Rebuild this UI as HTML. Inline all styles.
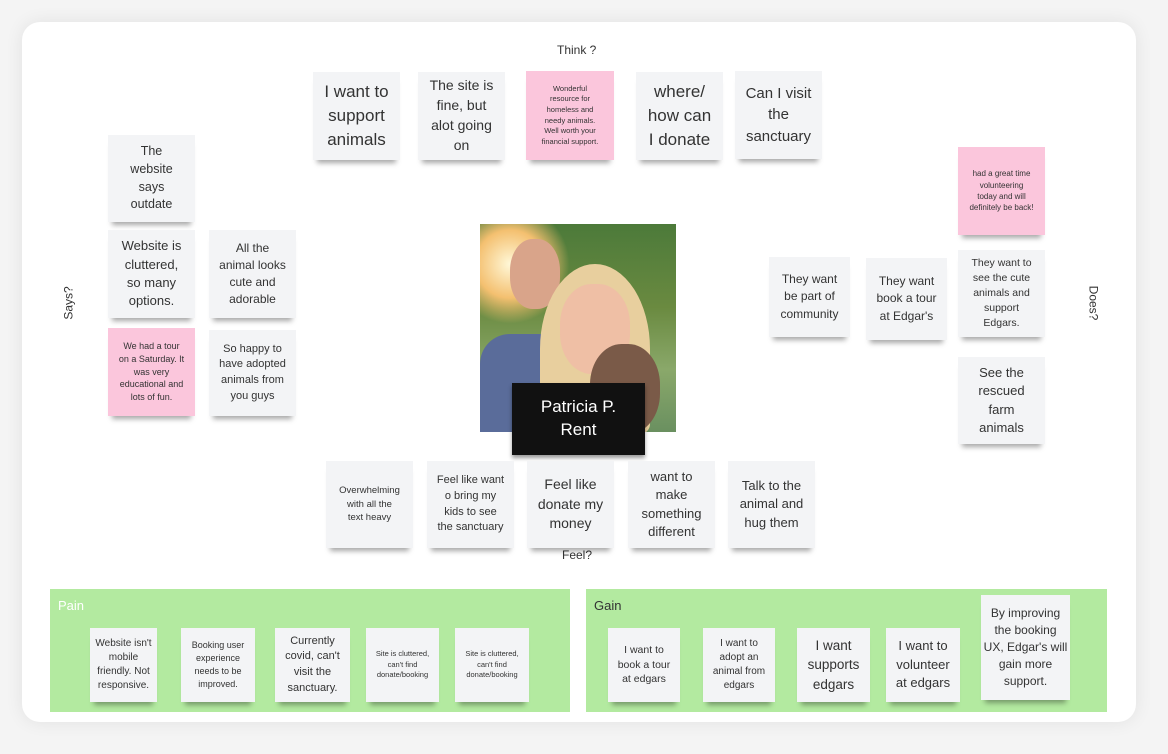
<!DOCTYPE html>
<html><head><meta charset="utf-8"><style>
*{margin:0;padding:0;box-sizing:border-box}
body{width:1168px;height:754px;background:#f4f4f4;font-family:"Liberation Sans",sans-serif;position:relative;overflow:hidden}
.board{position:absolute;left:22px;top:22px;width:1114px;height:700px;background:#fff;border-radius:18px;box-shadow:0 0 18px rgba(0,0,0,.08)}
.n{position:absolute;background:#f3f4f6;color:#333;display:flex;align-items:center;justify-content:center;text-align:center;line-height:1.42;box-shadow:0 7px 5px -4px rgba(0,0,0,.35);white-space:nowrap}
.p{background:#fbc6dc}
.lbl{position:absolute;font-size:12px;color:#333}
.zone{position:absolute;background:#b3eaa0;top:589px;height:123px}
.zone span{position:absolute;left:8px;top:9px;font-size:13px}
</style></head><body>
<div class="board"></div>
<div class="lbl" style="left:557px;top:43px">Think ?</div>
<div class="lbl" style="left:562px;top:548px">Feel?</div>
<div class="lbl" style="left:52px;top:296px;transform:rotate(-90deg)">Says?</div>
<div class="lbl" style="left:1076px;top:296px;transform:rotate(90deg)">Does?</div>

<div class="n" style="left:313px;top:72px;width:87px;height:88px;font-size:17px">I want to<br>support<br>animals</div>
<div class="n" style="left:418px;top:72px;width:87px;height:88px;font-size:14px">The site is<br>fine, but<br>alot going<br>on</div>
<div class="n p" style="left:526px;top:71px;width:88px;height:89px;font-size:7.5px">Wonderful<br>resource for<br>homeless and<br>needy animals.<br>Well worth your<br>financial support.</div>
<div class="n" style="left:636px;top:72px;width:87px;height:88px;font-size:17px">where/<br>how can<br>I donate</div>
<div class="n" style="left:735px;top:71px;width:87px;height:88px;font-size:15px">Can I visit<br>the<br>sanctuary</div>

<div class="n" style="left:108px;top:135px;width:87px;height:87px;font-size:12.5px">The<br>website<br>says<br>outdate</div>
<div class="n" style="left:108px;top:230px;width:87px;height:88px;font-size:13px">Website is<br>cluttered,<br>so many<br>options.</div>
<div class="n" style="left:209px;top:230px;width:87px;height:88px;font-size:12px">All the<br>animal looks<br>cute and<br>adorable</div>
<div class="n p" style="left:108px;top:328px;width:87px;height:88px;font-size:9px">We had a tour<br>on a Saturday. It<br>was very<br>educational and<br>lots of fun.</div>
<div class="n" style="left:209px;top:330px;width:87px;height:86px;font-size:11px">So happy to<br>have adopted<br>animals from<br>you guys</div>

<div class="n p" style="left:958px;top:147px;width:87px;height:88px;font-size:8px">had a great time<br>volunteering<br>today and will<br>definitely be back!</div>
<div class="n" style="left:958px;top:250px;width:87px;height:87px;font-size:10.5px">They want to<br>see the cute<br>animals and<br>support<br>Edgars.</div>
<div class="n" style="left:958px;top:357px;width:87px;height:87px;font-size:13px">See the<br>rescued<br>farm<br>animals</div>
<div class="n" style="left:769px;top:257px;width:81px;height:80px;font-size:12px">They want<br>be part of<br>community</div>
<div class="n" style="left:866px;top:258px;width:81px;height:82px;font-size:12px">They want<br>book a tour<br>at Edgar's</div>

<div style="position:absolute;left:480px;top:224px;width:196px;height:208px;overflow:hidden;background:linear-gradient(180deg,#4c7a3a 0%,#6a8a40 40%,#8aa86a 70%,#6a9060 100%)">
<div style="position:absolute;left:-30px;top:-20px;width:120px;height:120px;border-radius:50%;background:radial-gradient(#fff8d8,#f4c070 40%,rgba(240,170,80,0) 70%)"></div>
<div style="position:absolute;left:0;top:110px;width:90px;height:100px;background:#5a6c9a;border-radius:30px 30px 0 0"></div>
<div style="position:absolute;left:30px;top:15px;width:50px;height:70px;border-radius:45%;background:#d9a48a"></div>
<div style="position:absolute;left:60px;top:40px;width:110px;height:170px;border-radius:50% 50% 10px 10px;background:#e8cf9e"></div>
<div style="position:absolute;left:80px;top:60px;width:70px;height:90px;border-radius:45%;background:#efbfa5"></div>
<div style="position:absolute;left:110px;top:120px;width:70px;height:90px;border-radius:45%;background:#7a5a48"></div>
</div>
<div style="position:absolute;left:512px;top:383px;width:133px;height:72px;background:#111;color:#fff;font-size:17px;display:flex;align-items:center;justify-content:center;text-align:center;line-height:1.35;box-shadow:0 3px 4px rgba(0,0,0,.4)">Patricia P.<br>Rent</div>

<div class="n" style="left:326px;top:461px;width:87px;height:87px;font-size:9.5px">Overwhelming<br>with all the<br>text heavy</div>
<div class="n" style="left:427px;top:461px;width:87px;height:87px;font-size:11px">Feel like want<br>o bring my<br>kids to see<br>the sanctuary</div>
<div class="n" style="left:527px;top:461px;width:87px;height:87px;font-size:14px">Feel like<br>donate my<br>money</div>
<div class="n" style="left:628px;top:461px;width:87px;height:87px;font-size:13px">want to<br>make<br>something<br>different</div>
<div class="n" style="left:728px;top:461px;width:87px;height:87px;font-size:13px">Talk to the<br>animal and<br>hug them</div>

<div class="zone" style="left:50px;width:520px"><span style="color:#fff">Pain</span></div>
<div class="zone" style="left:586px;width:521px"><span style="color:#333">Gain</span></div>
<div class="n" style="left:90px;top:628px;width:67px;height:74px;font-size:10px">Website isn't<br>mobile<br>friendly. Not<br>responsive.</div>
<div class="n" style="left:181px;top:628px;width:74px;height:74px;font-size:9px">Booking user<br>experience<br>needs to be<br>improved.</div>
<div class="n" style="left:275px;top:628px;width:75px;height:74px;font-size:11px">Currently<br>covid, can't<br>visit the<br>sanctuary.</div>
<div class="n" style="left:366px;top:628px;width:73px;height:74px;font-size:7.5px">Site is cluttered,<br>can't find<br>donate/booking</div>
<div class="n" style="left:455px;top:628px;width:74px;height:74px;font-size:7.5px">Site is cluttered,<br>can't find<br>donate/booking</div>
<div class="n" style="left:608px;top:628px;width:72px;height:74px;font-size:10.5px">I want to<br>book a tour<br>at edgars</div>
<div class="n" style="left:703px;top:628px;width:72px;height:74px;font-size:10px">I want to<br>adopt an<br>animal from<br>edgars</div>
<div class="n" style="left:797px;top:628px;width:73px;height:74px;font-size:13.5px">I want<br>supports<br>edgars</div>
<div class="n" style="left:886px;top:628px;width:74px;height:74px;font-size:13px">I want to<br>volunteer<br>at edgars</div>
<div class="n" style="left:981px;top:595px;width:89px;height:105px;font-size:12px">By improving<br>the booking<br>UX, Edgar's will<br>gain more<br>support.</div>
</body></html>
